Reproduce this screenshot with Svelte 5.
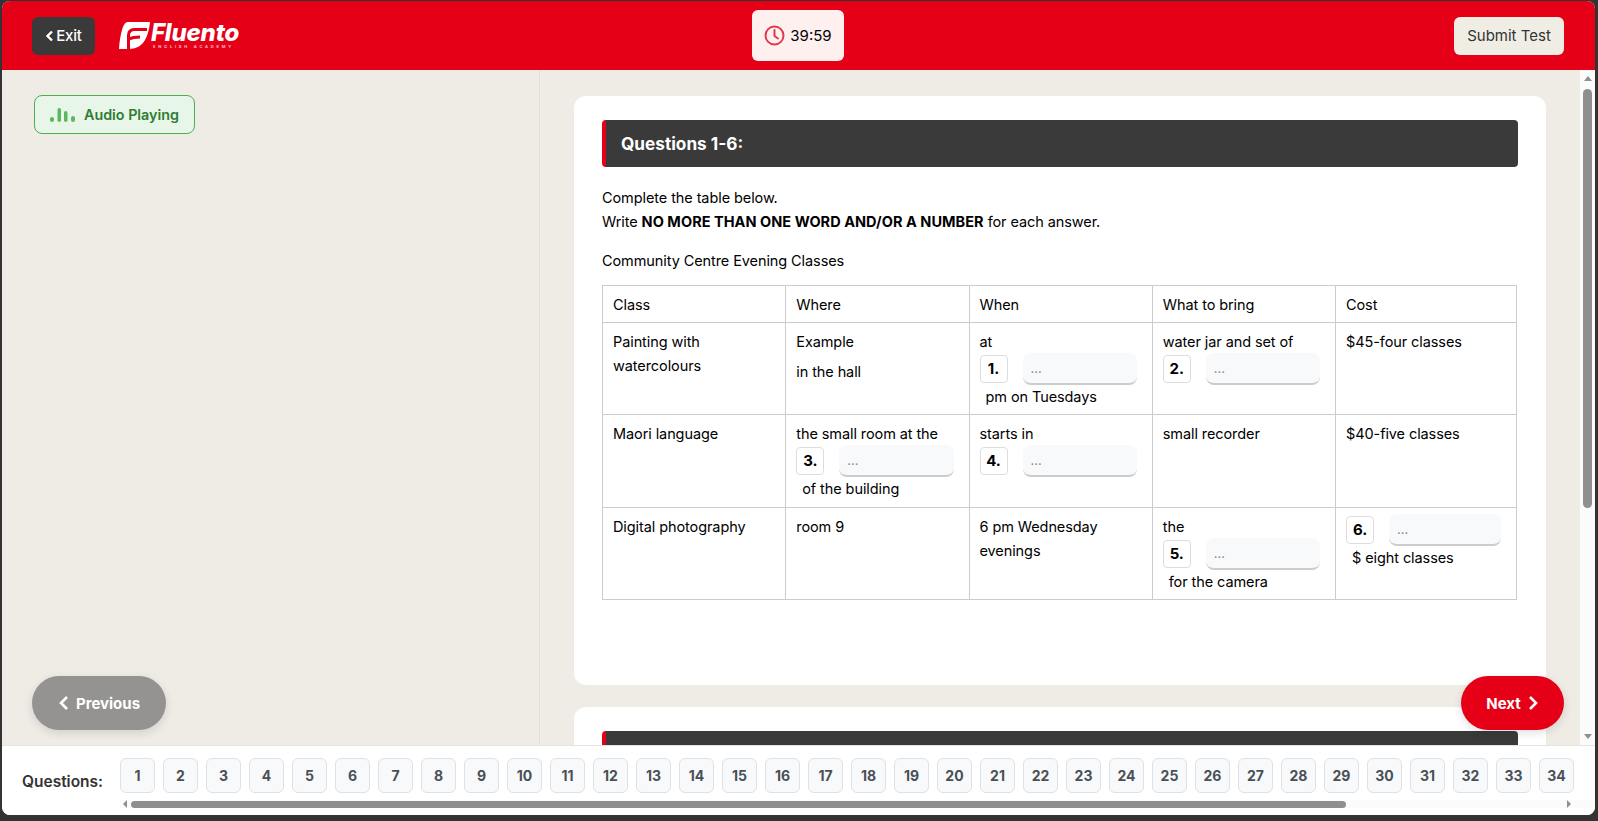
<script>
	const questionNumbers = Array.from({ length: 34 }, (_, i) => i + 1);
</script>

{#snippet blank(n)}
	<span class="blank">
		<span class="num">{n}.</span>
		<input type="text" placeholder="..." />
	</span>
{/snippet}

<div class="app">
	<header class="topbar">
		<div class="top-left">
			<button class="exit">
				<svg width="9" height="12" viewBox="0 0 9 12"><path d="M7 1.5 2.5 6 7 10.5" fill="none" stroke="currentColor" stroke-width="2.4" /></svg>
				Exit
			</button>
			<div class="logo">
				<svg width="31" height="27" viewBox="0 0 31 27">
					<path d="M9 0H31C30.500 6 29 12 27 16C24 23 18 27 10 27H0C0.500 19 1.500 13 3 8C4.500 3 6 0 9 0Z" fill="#fff" />
					<path d="M9.500 27V13.500C9.500 9.500 12 7.500 15.500 7.500H28M9.500 17C13 15.500 17 15 21 15" fill="none" stroke="#e60017" stroke-width="3" />
				</svg>
				<div class="wordmark">
					<span class="brand">Fluento</span>
					<span class="tag">ENGLISH ACADEMY</span>
				</div>
			</div>
		</div>
		<div class="timer">
			<svg width="21" height="21" viewBox="0 0 21 21" fill="none" stroke="#e0394d" stroke-width="2">
				<circle cx="10.500" cy="10.500" r="9" />
				<path d="M10.500 5v6l3.500 2.500" stroke-linecap="round" />
			</svg>
			<span>39:59</span>
		</div>
		<button class="submit">Submit Test</button>
	</header>

	<main class="body">
		<aside class="left">
			<div class="audio">
				<svg width="26" height="16" viewBox="0 0 26 16" fill="#5cb860">
					<rect x="0" y="10" width="4" height="5" rx="2" />
					<rect x="7.500" y="1" width="3.500" height="14" rx="1.750" />
					<rect x="14" y="4" width="3.500" height="11" rx="1.750" />
					<rect x="21" y="9" width="4" height="6" rx="2" />
				</svg>
				Audio Playing
			</div>
		</aside>

		<section class="right">
			<div class="scroll-content">
				<article class="card">
					<h2 class="q-head">Questions 1-6:</h2>
					<p class="intro">
						Complete the table below.<br />
						Write <strong>NO MORE THAN ONE WORD AND/OR A NUMBER</strong> for each answer.
					</p>
					<p class="table-title">Community Centre Evening Classes</p>
					<table>
						<thead>
							<tr>
								<th>Class</th>
								<th>Where</th>
								<th>When</th>
								<th>What to bring</th>
								<th>Cost</th>
							</tr>
						</thead>
						<tbody>
							<tr>
								<td>Painting with watercolours</td>
								<td>Example<p class="sub">in the hall</p></td>
								<td>at{@render blank(1)}<span class="after">pm on Tuesdays</span></td>
								<td>water jar and set of{@render blank(2)}</td>
								<td>$45-four classes</td>
							</tr>
							<tr>
								<td>Maori language</td>
								<td>the small room at the{@render blank(3)}<span class="after">of the building</span></td>
								<td>starts in{@render blank(4)}</td>
								<td>small recorder</td>
								<td>$40-five classes</td>
							</tr>
							<tr>
								<td>Digital photography</td>
								<td>room 9</td>
								<td>6 pm Wednesday evenings</td>
								<td>the{@render blank(5)}<span class="after">for the camera</span></td>
								<td>{@render blank(6)}<span class="after">$ eight classes</span></td>
							</tr>
						</tbody>
					</table>
				</article>
				<article class="card">
					<h2 class="q-head">&nbsp;</h2>
				</article>
			</div>
			<div class="vscroll">
				<span class="arrow up"></span>
				<span class="thumb"></span>
				<span class="arrow down"></span>
			</div>
		</section>

		<button class="float prev">
			<svg width="11" height="16" viewBox="0 0 11 16"><path d="M9 2 3 8l6 6" fill="none" stroke="currentColor" stroke-width="2.600" /></svg>
			Previous
		</button>
		<button class="float next">
			Next
			<svg width="11" height="16" viewBox="0 0 11 16"><path d="M2 2l6 6-6 6" fill="none" stroke="currentColor" stroke-width="2.600" /></svg>
		</button>
	</main>

	<footer class="qbar">
		<span class="qlabel">Questions:</span>
		<div class="qtrack">
			<div class="qlist">
				{#each questionNumbers as n}
					<button class="qbtn">{n}</button>
				{/each}
			</div>
			<div class="hscroll">
				<span class="harrow l"></span>
				<span class="hthumb"></span>
				<span class="harrow r"></span>
			</div>
		</div>
	</footer>
</div>

<style>
	:global(body) {
		background: #333;
		font-family: Inter, "Liberation Sans", sans-serif;
		overflow: hidden;
	}

	.app {
		height: 814px;
		margin: 1px 3px 6px 2px;
		border-radius: 8px;
		overflow: hidden;
		display: flex;
		flex-direction: column;
		background: #efece6;
	}

	button {
		font-family: inherit;
		border: none;
		cursor: pointer;
	}

	/* Top bar */
	.topbar {
		height: 69px;
		flex: none;
		background: #e60017;
		display: grid;
		grid-template-columns: 1fr auto 1fr;
		align-items: center;
		padding: 0 31px 0 30px;
	}

	.top-left {
		display: flex;
		align-items: center;
		gap: 24px;
	}

	.exit {
		width: 63px;
		height: 38px;
		background: #3a3a3a;
		color: #fff;
		border-radius: 6px;
		font-size: 15px;
		font-weight: 500;
		display: flex;
		align-items: center;
		justify-content: center;
		gap: 2px;
		letter-spacing: -0.2px;
	}

	.logo {
		display: flex;
		align-items: center;
		gap: 1px;
	}

	.wordmark {
		display: flex;
		flex-direction: column;
		align-items: flex-start;
	}

	.brand {
		color: #fff;
		font-size: 24px;
		line-height: 22px;
		font-weight: 800;
		font-style: italic;
		letter-spacing: -0.2px;
	}

	.tag {
		color: #fff;
		font-size: 4px;
		line-height: 5px;
		font-weight: 700;
		letter-spacing: 2.800px;
		opacity: 0.7;
		margin-left: 2px;
	}

	.timer {
		width: 92px;
		height: 51px;
		background: #fff0f0;
		border-radius: 6px;
		display: flex;
		align-items: center;
		justify-content: center;
		gap: 5px;
		font-size: 15px;
		color: #000;
	}

	.submit {
		justify-self: end;
		width: 110px;
		height: 38px;
		background: #f0ede5;
		color: #333;
		border-radius: 6px;
		font-size: 15px;
		font-weight: 400;
	}

	/* Body */
	.body {
		flex: 1;
		min-height: 0;
		display: flex;
		position: relative;
	}

	.left {
		width: 473px;
		flex: none;
		border-right: 1px solid #e2dfd9;
		padding: 25px 32px;
	}

	.audio {
		width: 161px;
		height: 39px;
		box-sizing: border-box;
		background: #e8f5e9;
		border: 1px solid #4caf50;
		border-radius: 8px;
		color: #2e7d32;
		font-size: 14.300px;
		font-weight: 600;
		display: flex;
		align-items: center;
		gap: 8px;
		padding-left: 15px;
	}

	.right {
		flex: 1;
		min-width: 0;
		display: flex;
	}

	.scroll-content {
		flex: 1;
		min-width: 0;
		overflow: hidden;
		padding: 26px 34px 0 34px;
	}

	.card {
		background: #fff;
		border-radius: 12px;
		padding: 24px 28px;
		height: 589px;
		box-sizing: border-box;
		margin-bottom: 22px;
		color: #000;
		font-size: 14.500px;
		line-height: 24px;
		letter-spacing: -0.09px;
	}

	.card strong {
		letter-spacing: 0.04px;
	}

	.q-head {
		margin: 0;
		height: 47px;
		box-sizing: border-box;
		background: #3a3a3a;
		border-left: 4px solid #e60017;
		border-radius: 4px;
		color: #fff;
		font-size: 17.200px;
		font-weight: 700;
		line-height: 47px;
		padding-left: 15px;
		letter-spacing: 0;
	}

	.intro {
		margin: 19px 0 15px;
	}

	.table-title {
		margin: 0 0 12px;
	}

	/* Table */
	table {
		width: calc(100% - 1px);
		table-layout: fixed;
		border-collapse: collapse;
	}

	th,
	td {
		border: 1px solid #ccc;
		text-align: left;
		vertical-align: top;
		padding: 7px 10px 5px;
		font-weight: 400;
	}

	th {
		line-height: 22px;
		padding: 8px 10px 6px;
	}

	th:last-child {
		width: 160px;
	}

	td {
		height: 79.300px;
	}

	.sub {
		margin: 6px 0 0;
	}

	.blank {
		display: flex;
		align-items: center;
		margin: -1px 5px 0 0;
		height: 32px;
	}

	.num {
		width: 28px;
		height: 28px;
		flex: none;
		box-sizing: border-box;
		border: 1px solid #ddd;
		border-radius: 4px;
		font-size: 15px;
		font-weight: 700;
		line-height: 26px;
		text-align: center;
		margin-right: 15px;
	}

	input {
		flex: 1;
		min-width: 0;
		height: 32px;
		box-sizing: border-box;
		background: #f8f9fa;
		border: none;
		border-bottom: 2px solid #ccc;
		border-radius: 8px;
		padding: 0 8px;
		font-family: inherit;
		font-size: 13px;
	}

	input::placeholder {
		color: #8a8a8a;
	}

	.after {
		display: block;
		margin-left: 6px;
	}

	/* Fake scrollbars */
	.vscroll {
		width: 15px;
		flex: none;
		background: #fbfbfb;
		display: flex;
		flex-direction: column;
		align-items: center;
	}

	.thumb {
		width: 9px;
		height: 419px;
		margin-top: 8px;
		border-radius: 5px;
		background: #8f8f8f;
		flex: none;
	}

	.arrow {
		width: 0;
		height: 0;
		border-left: 4.500px solid transparent;
		border-right: 4.500px solid transparent;
		flex: none;
	}

	.arrow.up {
		border-bottom: 5px solid #8f8f8f;
		margin-top: 6px;
	}

	.arrow.down {
		border-top: 5px solid #8f8f8f;
		margin-top: auto;
		margin-bottom: 6px;
	}

	/* Floating nav */
	.float {
		position: absolute;
		top: 606px;
		height: 54px;
		border-radius: 27px;
		color: #fff;
		font-size: 15px;
		font-weight: 700;
		display: flex;
		align-items: center;
		justify-content: center;
		gap: 7px;
		box-shadow: 0 3px 10px rgba(0, 0, 0, 0.12);
	}

	.prev {
		left: 30px;
		width: 134px;
		background: #949391;
	}

	.next {
		right: 31px;
		width: 103px;
		background: #e60017;
	}

	/* Question strip */
	.qbar {
		height: 70px;
		flex: none;
		box-sizing: border-box;
		background: #fff;
		border-top: 1px solid #e4e4e4;
		display: flex;
		padding: 12px 0 0 20px;
	}

	.qlabel {
		width: 98px;
		flex: none;
		padding-top: 14px;
		font-size: 15.500px;
		line-height: 20px;
		font-weight: 600;
		color: #333;
	}

	.qtrack {
		flex: 1;
		min-width: 0;
		display: flex;
		flex-direction: column;
	}

	.qlist {
		display: flex;
		gap: 8px;
	}

	.qbtn {
		width: 35px;
		height: 35px;
		flex: none;
		padding: 0;
		box-sizing: border-box;
		background: #f8f9fa;
		border: 1px solid #dee2e6;
		border-radius: 6px;
		color: #495057;
		font-size: 14px;
		font-weight: 700;
	}

	.hscroll {
		height: 8px;
		margin: 7px 0 0;
		display: flex;
		align-items: center;
		background: #fbfbfb;
		padding-left: 3px;
	}

	.hthumb {
		width: 1215px;
		height: 7px;
		border-radius: 4px;
		background: #8f8f8f;
		margin-left: 4px;
	}

	.harrow {
		width: 0;
		height: 0;
		border-top: 4px solid transparent;
		border-bottom: 4px solid transparent;
		flex: none;
	}

	.harrow.l {
		border-right: 4px solid #8f8f8f;
	}

	.harrow.r {
		border-left: 4px solid #8f8f8f;
		margin-left: auto;
		margin-right: 24px;
	}
</style>
